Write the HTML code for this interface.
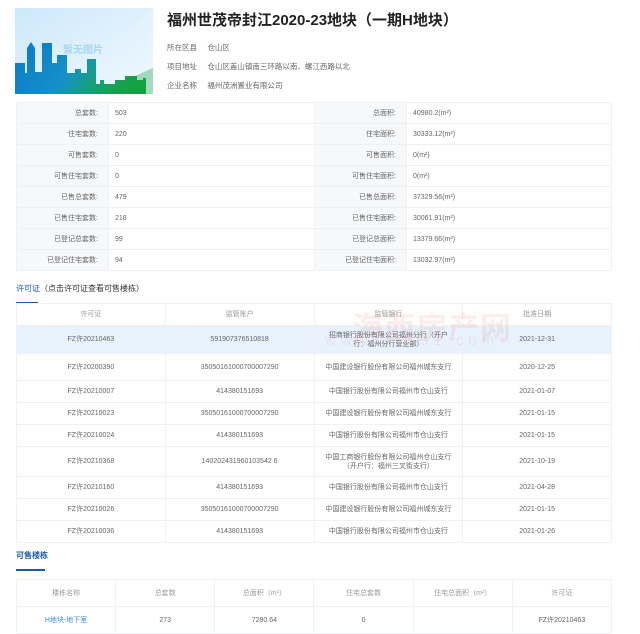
<!DOCTYPE html>
<html><head><meta charset="utf-8"><style>
*{margin:0;padding:0;box-sizing:border-box}
body{width:640px;height:621px;overflow:hidden;background:#fff;font-family:"Liberation Sans","Noto Sans CJK SC",sans-serif;color:#555;position:relative}
.a{position:absolute}
table{border-collapse:collapse;position:absolute;left:16px;width:596px;table-layout:fixed}
td{border:1px solid #f0f1f4;font-size:7px;color:#666;text-align:center;line-height:9px}
.info td{height:21px;text-align:left;padding-left:6px}
.info td.l{background:#f7f8fa;text-align:right;padding-right:10px;padding-left:0}
.h td{color:#999}
.hl td{background:#e8f2fd}
</style></head><body>
<svg class="a" style="left:15px;top:8px" width="138" height="86" viewBox="0 0 138 86">
<defs><linearGradient id="bg" x1="0" y1="0" x2="1" y2="1"><stop offset="0" stop-color="#cde8fb"/><stop offset="1" stop-color="#f0f9fe"/></linearGradient>
<linearGradient id="c" x1="0" y1="0" x2="1" y2="0.3"><stop offset="0" stop-color="#0a78c8"/><stop offset="0.5" stop-color="#1590c8"/><stop offset="0.75" stop-color="#18a070"/><stop offset="1" stop-color="#16a040"/></linearGradient></defs>
<rect width="138" height="86" fill="url(#bg)"/>
<path d="M0 120 Q60 40 138 30 V0 H138z" fill="#e4f3fd" opacity="0.6"/>
<path d="M0 86V55h10v10h2V40l4-6 4 6v24h7V35h10v20h5V47h10v18h8v-4h6v4h6V51h9v25h4v-4h4v4h11v-4h10v-4h12v4h6v-2h3v16H138v4z" fill="url(#c)"/>
<path d="M0 86 L80 86 L138 60 V86z" fill="#1aa048" opacity="0.35"/>
<text x="48" y="45" font-size="10" fill="#a8d4f5" font-weight="bold" font-family="Noto Sans CJK SC">暂无图片</text>
</svg>
<div class="a" style="left:167px;top:9px;font-size:15px;font-weight:bold;color:#222">福州世茂帝封江2020-23地块（一期H地块）</div>
<div class="a" style="left:167px;top:38px;font-size:7.5px;color:#666;line-height:19px">所在区县&nbsp;&nbsp;&nbsp;&nbsp;&nbsp;仓山区<br>项目地址&nbsp;&nbsp;&nbsp;&nbsp;&nbsp;仓山区盖山镇南三环路以南、螺江西路以北<br>企业名称&nbsp;&nbsp;&nbsp;&nbsp;&nbsp;福州茂洲置业有限公司</div>
<table class="info" style="top:102px">
<colgroup><col style="width:92px"><col style="width:206px"><col style="width:92px"><col></colgroup>
<tr><td class="l">总套数:</td><td>503</td><td class="l">总面积:</td><td>40980.2(m²)</td></tr>
<tr><td class="l">住宅套数:</td><td>220</td><td class="l">住宅面积:</td><td>30333.12(m²)</td></tr>
<tr><td class="l">可售套数:</td><td>0</td><td class="l">可售面积:</td><td>0(m²)</td></tr>
<tr><td class="l">可售住宅套数:</td><td>0</td><td class="l">可售住宅面积:</td><td>0(m²)</td></tr>
<tr><td class="l">已售总套数:</td><td>479</td><td class="l">已售总面积:</td><td>37329.56(m²)</td></tr>
<tr><td class="l">已售住宅套数:</td><td>218</td><td class="l">已售住宅面积:</td><td>30061.91(m²)</td></tr>
<tr><td class="l">已登记总套数:</td><td>99</td><td class="l">已登记总面积:</td><td>13379.66(m²)</td></tr>
<tr><td class="l">已登记住宅套数:</td><td>94</td><td class="l">已登记住宅面积:</td><td>13032.97(m²)</td></tr>
</table>
<div class="a" style="left:16px;top:283px;font-size:8px;color:#333"><span style="color:#1a5aa8">许可证</span>（点击许可证查看可售楼栋）</div>
<div class="a" style="left:16px;top:302px;width:22px;height:2px;background:#1a5aa8"></div>
<table style="top:303px">
<tr class="h"><td style="height:22px">许可证</td><td>监管账户</td><td>监管银行</td><td>批准日期</td></tr>
<tr class="hl"><td style="height:28px">FZ许20210463</td><td>591907376510818</td><td style="padding:0 8px">招商银行股份有限公司福州分行（开户行：福州分行营业部）</td><td>2021-12-31</td></tr>
<tr><td style="height:27px">FZ许20200390</td><td>35050161000700007290</td><td>中国建设银行股份有限公司福州城东支行</td><td>2020-12-25</td></tr>
<tr><td style="height:22px">FZ许20210007</td><td>414380151693</td><td>中国银行股份有限公司福州市仓山支行</td><td>2021-01-07</td></tr>
<tr><td style="height:22px">FZ许20210023</td><td>35050161000700007290</td><td>中国建设银行股份有限公司福州城东支行</td><td>2021-01-15</td></tr>
<tr><td style="height:22px">FZ许20210024</td><td>414380151693</td><td>中国银行股份有限公司福州市仓山支行</td><td>2021-01-15</td></tr>
<tr><td style="height:30px">FZ许20210368</td><td>140202431960103542 6</td><td style="padding:0 8px">中国工商银行股份有限公司福州仓山支行（开户行：福州三叉街支行）</td><td>2021-10-19</td></tr>
<tr><td style="height:22px">FZ许20210160</td><td>414380151693</td><td>中国银行股份有限公司福州市仓山支行</td><td>2021-04-28</td></tr>
<tr><td style="height:22px">FZ许20210026</td><td>35050161000700007290</td><td>中国建设银行股份有限公司福州城东支行</td><td>2021-01-15</td></tr>
<tr><td style="height:22px">FZ许20210036</td><td>414380151693</td><td>中国银行股份有限公司福州市仓山支行</td><td>2021-01-26</td></tr>
</table>
<div class="a" style="left:16px;top:550px;font-size:8px;font-weight:bold;color:#1a5aa8">可售楼栋</div>
<div class="a" style="left:16px;top:569px;width:29px;height:2px;background:#1a5aa8"></div>
<table style="top:579px">
<tr class="h"><td style="height:27px">楼栋名称</td><td>总套数</td><td>总面积（m²）</td><td>住宅总套数</td><td>住宅总面积（m²）</td><td>许可证</td></tr>
<tr><td style="height:27px;color:#3a8ee6">H地块-地下室</td><td>273</td><td>7280.64</td><td>0</td><td></td><td>FZ许20210463</td></tr>
</table>
<div class="a" style="left:352px;top:303px;font-size:31px;font-weight:bold;color:rgba(220,60,60,0.09);letter-spacing:1px">海西房产网</div>
<div class="a" style="left:325px;top:332px;font-size:15px;color:rgba(220,60,60,0.09);letter-spacing:5px">www.hx591.com</div>
</body></html>
